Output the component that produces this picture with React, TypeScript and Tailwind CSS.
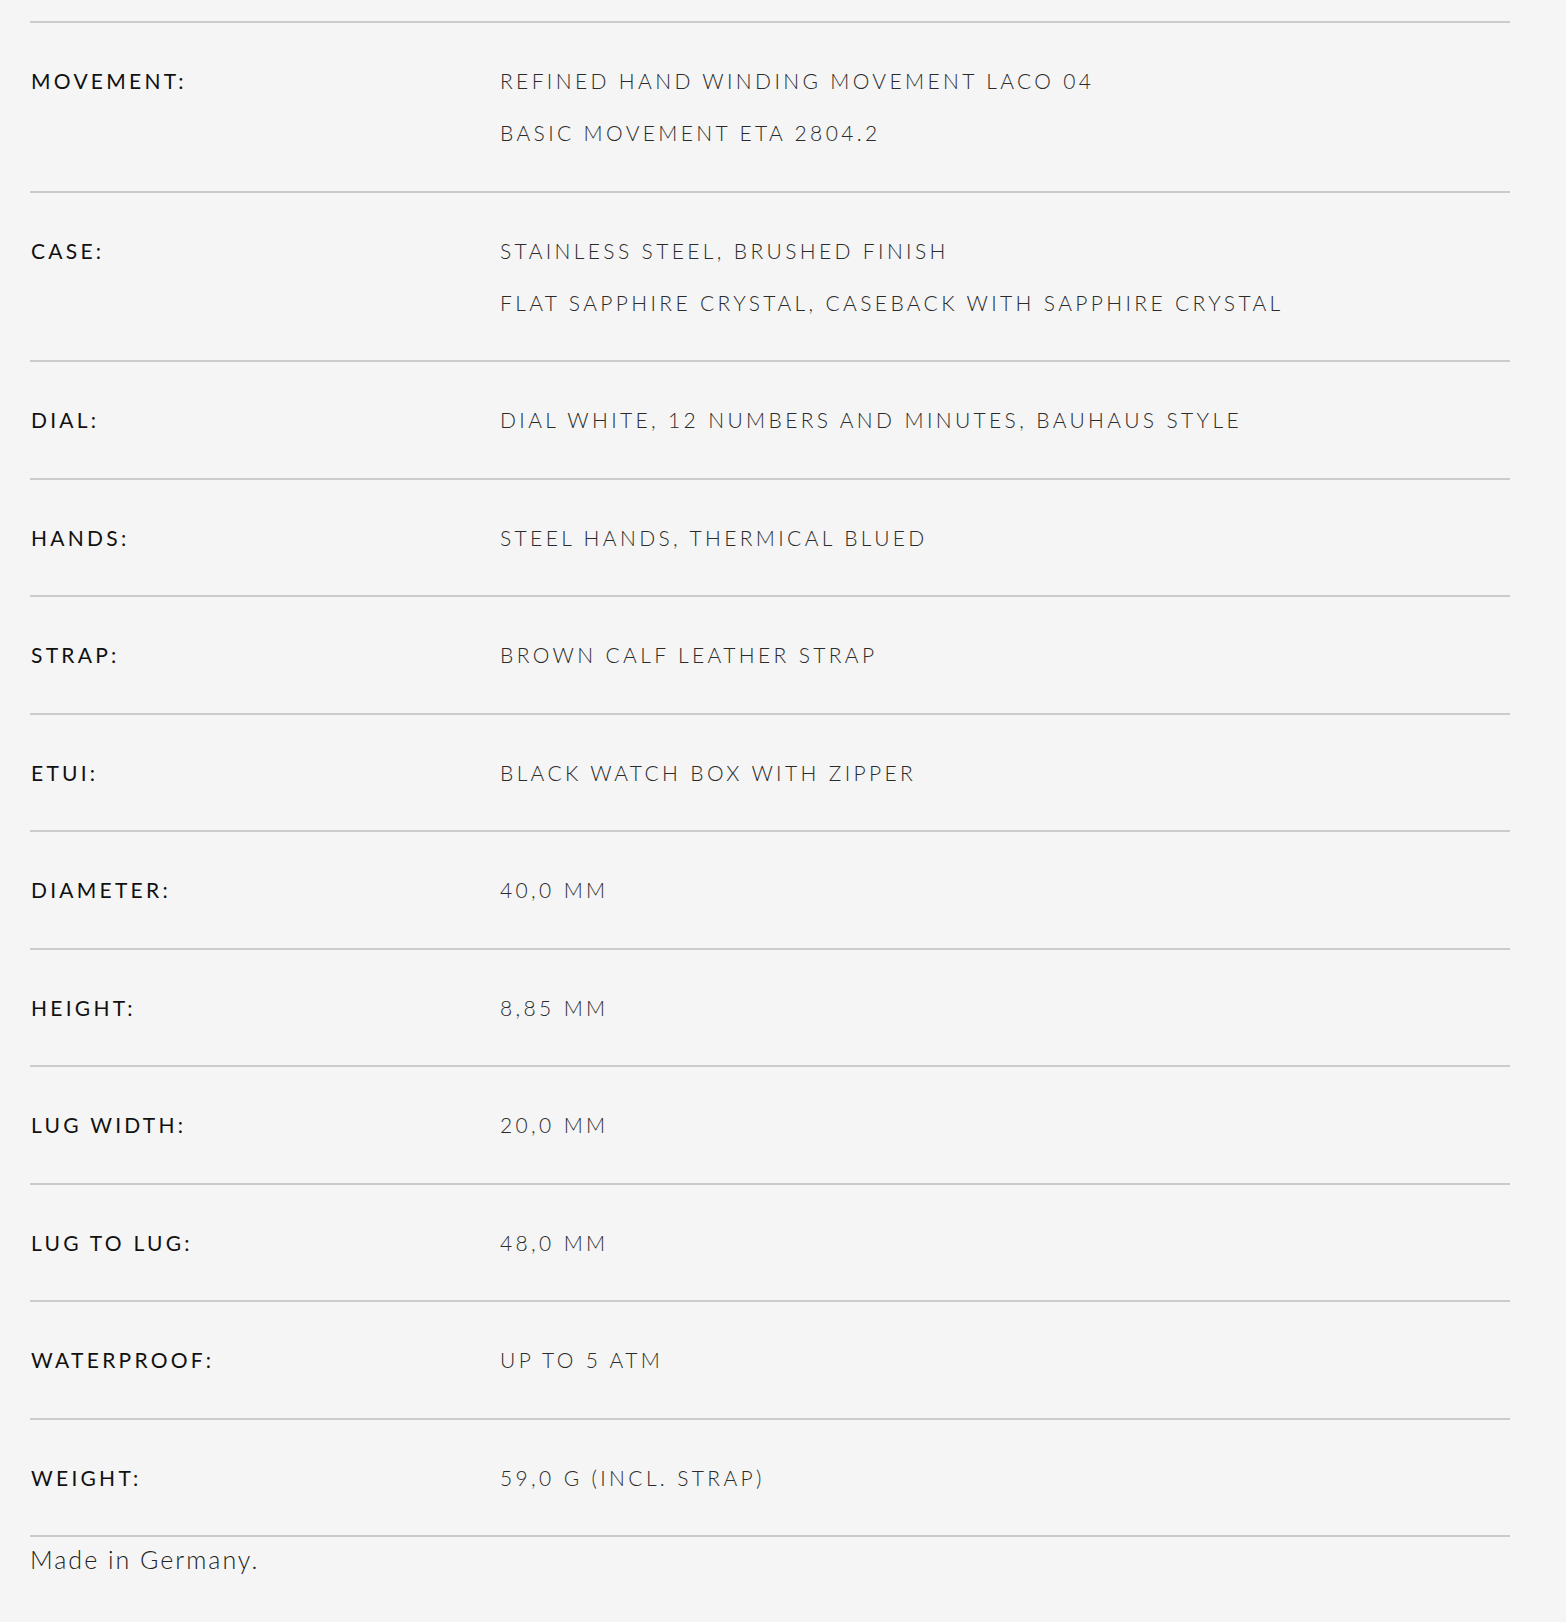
import React from 'react';

interface SpecRow {
    label: string;
    values: string[];
}

const specs: SpecRow[] = [
    { label: 'Movement:', values: ['Refined hand winding movement Laco 04', 'Basic movement ETA 2804.2'] },
    { label: 'Case:', values: ['Stainless steel, brushed finish', 'Flat sapphire crystal, caseback with sapphire crystal'] },
    { label: 'Dial:', values: ['Dial white, 12 numbers and minutes, Bauhaus style'] },
    { label: 'Hands:', values: ['Steel hands, thermical blued'] },
    { label: 'Strap:', values: ['Brown calf leather strap'] },
    { label: 'Etui:', values: ['Black watch box with zipper'] },
    { label: 'Diameter:', values: ['40,0 mm'] },
    { label: 'Height:', values: ['8,85 mm'] },
    { label: 'Lug width:', values: ['20,0 mm'] },
    { label: 'Lug to lug:', values: ['48,0 mm'] },
    { label: 'Waterproof:', values: ['Up to 5 ATM'] },
    { label: 'Weight:', values: ['59,0 g (incl. strap)'] },
];

export default function App() {
    return (
        <div className="min-h-[1622px] bg-[#f5f5f5] pt-[21px] pl-[30px] pr-[56px] font-['Lato','Liberation_Sans',sans-serif]">
            <div className="w-[1480px]">
                {specs.map(row => (
                    <div key={row.label} className="grid grid-cols-[470px_1fr] border-t-2 border-[#cbcbcb] py-[31.75px]">
                        <div className="flex h-[52px] items-center pl-px text-[21px] font-normal uppercase tracking-[0.155em] text-[#111]">
                            {row.label}
                        </div>
                        <div className="flex flex-col">
                            {row.values.map(v => (
                                <div key={v} className="flex h-[52px] items-center text-[21px] font-light uppercase tracking-[0.16em] text-[#2b2b2b]">
                                    {v}
                                </div>
                            ))}
                        </div>
                    </div>
                ))}
                <div className="border-t-2 border-[#cbcbcb] pt-[6px] text-[25px] font-light leading-[32px] tracking-[0.08em] text-[#222]">
                    Made in Germany.
                </div>
            </div>
        </div>
    );
}
